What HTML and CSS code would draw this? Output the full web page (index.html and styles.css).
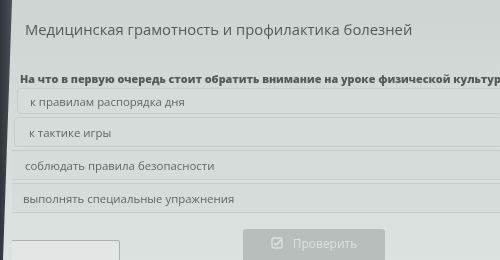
FILE: index.html
```html
<!DOCTYPE html>
<html lang="ru">
<head>
<meta charset="utf-8">
<link rel="stylesheet" href="styles.css">
</head>
<body>
<div class="screen">
  <div class="bezel"></div>
  <main class="content">
    <h1 class="title">Медицинская грамотность и профилактика болезней</h1>
    <p class="question">На что в первую очередь стоит обратить внимание на уроке физической культуры</p>
    <ul class="options">
      <li class="option">к правилам распорядка дня</li>
      <li class="option">к тактике игры</li>
      <li class="option">соблюдать правила безопасности</li>
      <li class="option">выполнять специальные упражнения</li>
    </ul>
    <div class="footer">
      <div class="field"></div>
      <button class="check-btn">
        <svg class="check-icon" width="12" height="12" viewBox="0 0 12 12"><rect x="1" y="1" width="10" height="10" rx="1.5" fill="none" stroke="currentColor" stroke-width="1.4"/><path d="M3.2 6.2 L5.2 8.2 L10.5 2.5" fill="none" stroke="currentColor" stroke-width="1.6"/></svg>
        <span>Проверить</span>
      </button>
    </div>
  </main>
</div>
</body>
</html>
```
FILE: styles.css
```css
* { box-sizing: border-box; }
html, body { margin: 0; padding: 0; }
body {
  width: 500px;
  height: 260px;
  overflow: hidden;
  background: linear-gradient(180deg, #cdd4d1 0%, #d6dcda 50%, #dce2e0 100%);
  font-family: "Open Sans", "Noto Sans", sans-serif;
  color: #56595a;
}
.screen {
  display: flex;
  height: 260px;
  filter: blur(0.35px);
}
.bezel {
  flex: 0 0 12px;
  background: linear-gradient(90deg, #30353c, #4a5057);
  clip-path: polygon(0 0, 12px 0, 3px 100%, 0 100%);
}
.content {
  flex: 1;
  min-width: 0;
  padding-top: 18px;
  overflow: hidden;
}
.title {
  margin: 0 0 0 13px;
  font-size: 14.8px;
  line-height: 22px;
  font-weight: 400;
  color: #55595b;
  white-space: nowrap;
}
.question {
  margin: 30px 0 0 8px;
  font-size: 10.8px;
  line-height: 18px;
  font-weight: 800;
  color: #55595a;
  white-space: nowrap;
}
.options {
  list-style: none;
  margin: 0;
  padding: 0;
  display: flex;
  flex-direction: column;
  gap: 3px;
}
.option {
  height: 30px;
  margin-left: 2px;
  margin-right: -6px;
  padding: 0 14px;
  display: flex;
  align-items: center;
  font-size: 11.4px;
  color: #626667;
  border: 1px solid #c6cdca;
  border-radius: 4px;
  background: #d6dcda;
}
.option:first-child { height: 26px; margin-left: 5px; padding-left: 12px; }
.option:nth-child(3) { margin-left: -2px; }
.option:nth-child(4) { margin-left: -4px; }
.footer {
  margin-top: 16px;
  display: flex;
  align-items: flex-start;
}
.field {
  margin-top: 11px;
  margin-left: -9px;
  width: 117px;
  height: 22px;
  border: 1px solid #aab2af;
  border-radius: 2px;
  background: #e2e7e5;
}
.check-btn {
  margin-left: 123px;
  width: 142px;
  height: 34px;
  border: none;
  border-radius: 3px;
  background: #b7bebb;
  color: #dde2e0;
  font-family: inherit;
  font-size: 12px;
  display: flex;
  align-items: center;
  justify-content: center;
  gap: 10px;
  padding: 0 0 6px 0;
}
.check-icon { display: block; }
```
